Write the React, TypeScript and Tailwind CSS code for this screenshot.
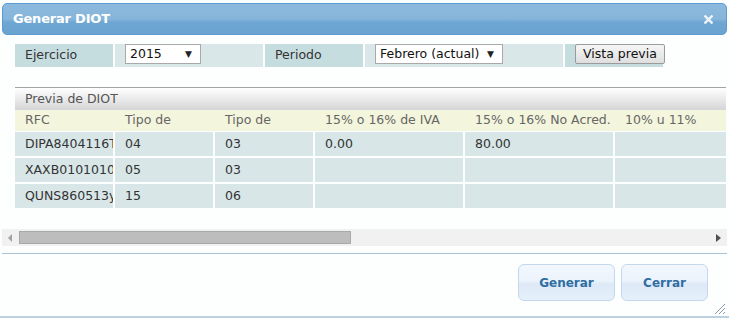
import React from "react";

const font = { fontFamily: '"DejaVu Sans", Verdana, sans-serif' };

function Select({ value, width }: { value: string; width: string }) {
  return (
    <div
      className={`${width} h-[20px] bg-white border border-[#a9a9a9] flex items-center justify-between pl-[4px] pr-[8px] text-[12.5px] text-[#111] leading-none`}
    >
      <span>{value}</span>
      <span className="text-[9px] text-[#222]">▼</span>
    </div>
  );
}

const rows = [
  ["DIPA8404116T7", "04", "03", "0.00", "80.00", ""],
  ["XAXB010101000", "05", "03", "", "", ""],
  ["QUNS860513yz1", "15", "06", "", "", ""],
];

const cols = "grid grid-cols-[98px_98px_98px_148px_148px_111px] gap-x-[2px]";

export default function App() {
  return (
    <div className="w-[729px] h-[319px] bg-[#fdfefe] relative overflow-hidden flex flex-col" style={font}>
      {/* Title bar */}
      <div className="mx-[2px] mt-[3px] h-[32px] rounded-[5px] border border-[#5b9ad2] bg-[linear-gradient(to_bottom,#8dbade_0%,#86b5da_50%,#6fa7d3_60%,#6aa3d0_100%)] flex items-center justify-between pl-[10px] pr-[10px]">
        <span className="text-white font-bold text-[13px] tracking-[-0.2px]">Generar DIOT</span>
        <svg width="9" height="9" viewBox="0 0 10 10" className="mr-[3px]">
          <path d="M1.5 1.5 L8.5 8.5 M8.5 1.5 L1.5 8.5" stroke="#eef4fa" strokeWidth="2.6" strokeLinecap="square" />
        </svg>
      </div>

      {/* Form row */}
      <div className="mt-[9px] ml-[15px] flex gap-x-[2px] h-[23px] text-[12.5px] text-[#333]">
        <div className="w-[98px] bg-[#c6dde0] flex items-center pl-[10px]">Ejercicio</div>
        <div className="w-[148px] bg-[#d9e7e8] pl-[10px]">
          <Select value="2015" width="w-[76px]" />
        </div>
        <div className="w-[98px] bg-[#c6dde0] flex items-center pl-[10px]">Periodo</div>
        <div className="w-[198px] bg-[#d9e7e8] pl-[10px]">
          <Select value="Febrero (actual)" width="w-[128px]" />
        </div>
        <div className="w-[98px] bg-[#c6dde0] pl-[10px]">
          <div className="w-[90px] h-[20px] rounded-[2px] border border-[#9a9a9a] bg-[linear-gradient(to_bottom,#f6f6f6,#dedede)] flex items-center justify-center text-[12.5px] text-[#111] leading-none">
            Vista previa
          </div>
        </div>
      </div>

      {/* Previa header */}
      <div className="mt-[20px] ml-[15px] mr-[3px] h-[23px] border-t border-[#a3a3a3] bg-[linear-gradient(to_bottom,#ffffff,#d5d5d5)] flex items-center pl-[10px] text-[12.5px] text-[#555]">
        Previa de DIOT
      </div>

      {/* Table */}
      <div className="ml-[15px] mr-[3px] text-[12.5px]">
        <div className={`${cols} h-[21px] bg-[#f3f5dc] text-[#666] items-center`}>
          {["RFC", "Tipo de", "Tipo de", "15% o 16% de IVA", "15% o 16% No Acred.", "10% u 11%"].map((h, i) => (
            <div key={i} className="pl-[10px] whitespace-nowrap overflow-hidden">
              {h}
            </div>
          ))}
        </div>
        <div className="flex flex-col gap-y-[2px] pt-[1px]">
          {rows.map((r, ri) => (
            <div key={ri} className={`${cols} h-[24px]`}>
              {r.map((c, ci) => (
                <div
                  key={ci}
                  className="bg-[#d8e6e8] pl-[10px] pt-[1px] flex items-center whitespace-nowrap overflow-hidden text-[#333]"
                >
                  {c}
                </div>
              ))}
            </div>
          ))}
        </div>
      </div>

      {/* Scrollbar */}
      <div className="mt-[21px] mx-[2px] h-[17px] bg-[#f1f1f1] flex items-center relative">
        <svg width="5" height="8" viewBox="0 0 5 8" className="ml-[6px]">
          <path d="M4 0 L0 4 L4 8 Z" fill="#a3a3a3" />
        </svg>
        <div className="ml-[6px] w-[332px] h-[13px] bg-[#bdbdbd] border border-[#a8a8a8]" />
        <div className="flex-1" />
        <svg width="5" height="8" viewBox="0 0 5 8" className="mr-[6px]">
          <path d="M0 0 L5 4 L0 8 Z" fill="#505050" />
        </svg>
      </div>

      {/* Separator */}
      <div className="mt-[7px] mx-[2px] h-[1px] bg-[#aac5da]" />

      {/* Buttons */}
      <div className="mt-[10px] flex justify-end gap-x-[6px] pr-[21px]">
        {[
          ["Generar", "w-[97px]"],
          ["Cerrar", "w-[87px]"],
        ].map(([t, w]) => (
          <div
            key={t}
            className={`${w} h-[37px] rounded-[6px] border border-[#c3d8ec] bg-[linear-gradient(to_bottom,#f2f7fd_0%,#ebf3fc_45%,#dde9f7_55%,#e6f0fb_100%)] flex items-center justify-center text-[12px] font-bold text-[#2f6ea3]`}
          >
            {t}
          </div>
        ))}
      </div>

      {/* Bottom border */}
      <div className="absolute left-0 right-0 bottom-[1px] h-[2px] bg-[#bcd2e3]" />

      {/* Resize grip */}
      <svg width="12" height="12" viewBox="0 0 12 12" className="absolute right-[3px] bottom-[4px]">
        <path d="M11 1 L1 11 M11 5 L5 11 M11 9 L9 11" stroke="#8a9aa8" strokeWidth="1" />
      </svg>
    </div>
  );
}
